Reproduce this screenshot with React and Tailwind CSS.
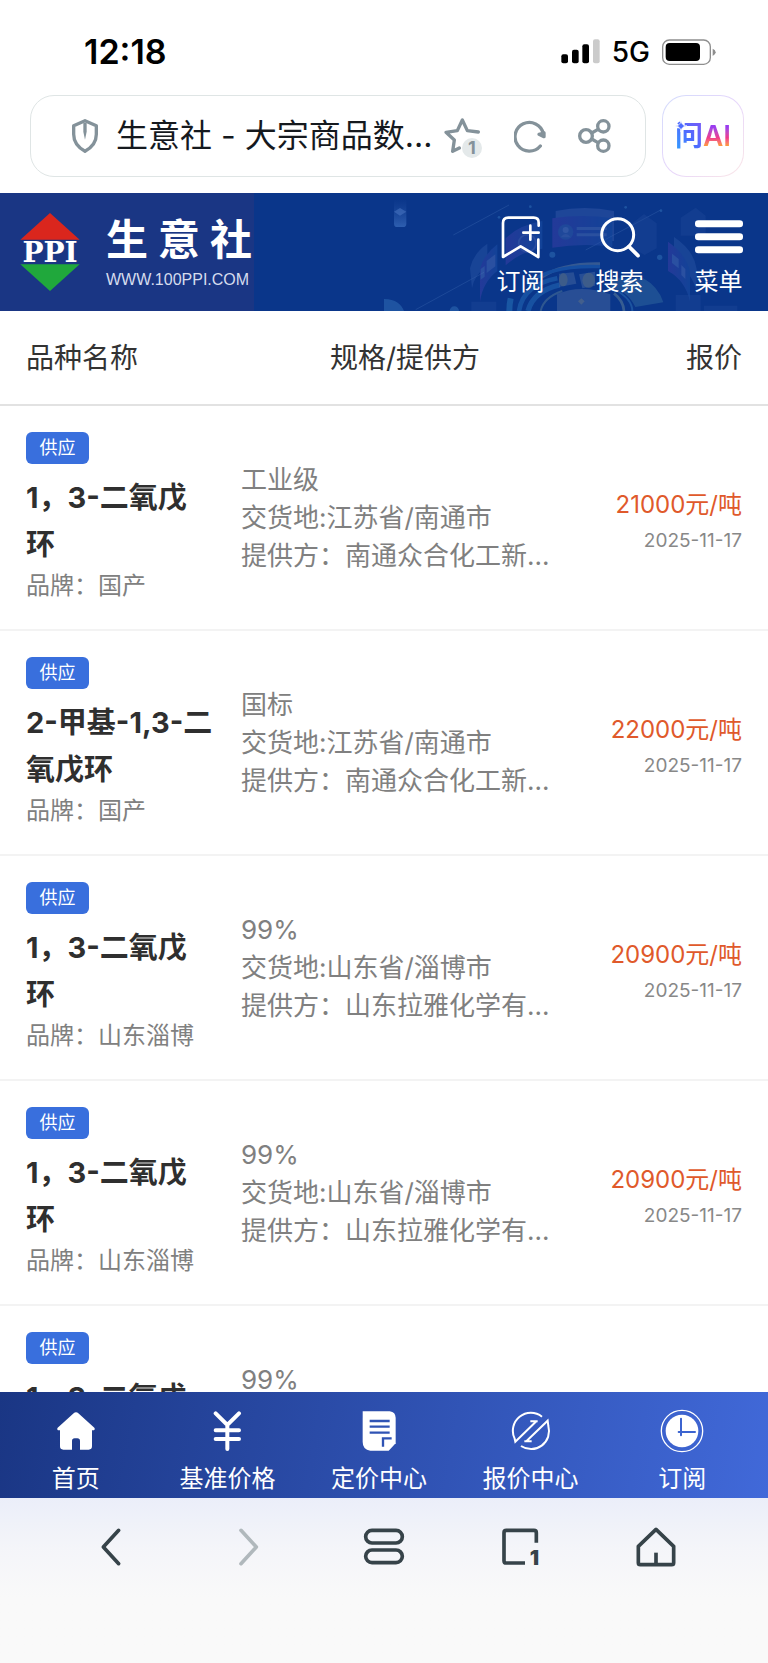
import React from 'react';

const offers = [
  { id: 1, name: '1，3-二氧戊环', brand: '国产', spec: '工业级', place: '江苏省/南通市', supplier: '南通众合化工新...', price: '21000', date: '2025-11-17' },
  { id: 2, name: '2-甲基-1,3-二氧戊环', brand: '国产', spec: '国标', place: '江苏省/南通市', supplier: '南通众合化工新...', price: '22000', date: '2025-11-17' },
  { id: 3, name: '1，3-二氧戊环', brand: '山东淄博', spec: '99%', place: '山东省/淄博市', supplier: '山东拉雅化学有...', price: '20900', date: '2025-11-17' },
  { id: 4, name: '1，3-二氧戊环', brand: '山东淄博', spec: '99%', place: '山东省/淄博市', supplier: '山东拉雅化学有...', price: '20900', date: '2025-11-17' },
  { id: 5, name: '1，3-二氧戊环', brand: '山东淄博', spec: '99%', place: '山东省/淄博市', supplier: '山东拉雅化学有...', price: '20900', date: '2025-11-17' },
];

const StatusBar = () => (
  <div className="h-[95px] shrink-0 pt-2 pl-[84px] pr-[52px] flex items-center justify-between text-black">
    <span className="text-[34px] font-semibold">12:18</span>
    <div className="flex items-center gap-3">
      <svg width="39" height="25" viewBox="0 0 117 75" aria-hidden="true">
        <rect x="1" y="46" width="20" height="27" rx="6" />
        <rect x="33" y="32" width="20" height="41" rx="6" />
        <rect x="64" y="16" width="20" height="57" rx="6" />
        <rect x="96" y="1" width="20" height="72" rx="6" fill="#cbcbcb" />
      </svg>
      <span className="text-[28px] font-medium">5G</span>
      <svg width="54" height="26" viewBox="0 0 162 78" aria-hidden="true">
        <rect x="2" y="3" width="143" height="73" rx="20" fill="none" stroke="#8e8e8e" strokeWidth="4" />
        <rect x="11" y="12" width="103" height="54" rx="12" />
        <path d="M152 29q9 4 9 11t-9 11z" fill="#8e8e8e" />
      </svg>
    </div>
  </div>
);

const AddressBar = () => (
  <div className="shrink-0 pl-[30px] pr-6 pb-4 flex gap-4">
    <div className="flex-1 min-w-0 h-[82px] pl-[41px] pr-[34px] flex items-center border border-[#dfe5e5] rounded-3xl">
      <svg className="shrink-0" width="26" height="34" viewBox="0 0 78 102" aria-hidden="true">
        <path d="M39 5 73 20v26c0 24-14 40-34 51C19 86 5 70 5 46V20z" fill="none" stroke="#84929a" strokeWidth="10" strokeLinejoin="round" />
        <path d="M34 12h10v26l-5 24-5-24z" fill="#84929a" />
      </svg>
      <input
        type="text"
        aria-label="地址栏"
        defaultValue="生意社 - 大宗商品数..."
        className="flex-1 min-w-0 ml-[18px] bg-transparent outline-none text-[32px] text-[#15191e]"
      />
      <div className="flex items-center gap-8">
        <button type="button" aria-label="收藏" className="relative">
          <svg width="38" height="36" viewBox="0 0 114 108" fill="none" stroke="#84929a" strokeWidth="10" strokeLinecap="round" strokeLinejoin="round" aria-hidden="true">
            <path d="M103 42 70 38 55 6 40 38 6 43 31 66 26 100 46 90" />
          </svg>
          <span className="absolute right-0 -bottom-1 w-5 h-5 rounded-full bg-[#e4e9ea] text-[#84929a] text-lg leading-5 font-bold text-center">
            1
          </span>
        </button>
        <button type="button" aria-label="刷新">
          <svg width="32" height="34" viewBox="0 0 96 102" fill="none" stroke="#84929a" strokeWidth="10" strokeLinecap="round" aria-hidden="true">
            <path d="M79 81A43 43 0 1 1 88 44" />
            <path d="M90 42v11l-15-7z" fill="#84929a" strokeLinejoin="round" />
          </svg>
        </button>
        <button type="button" aria-label="分享">
          <svg width="33" height="34" viewBox="0 0 99 102" fill="none" stroke="#84929a" strokeWidth="10" aria-hidden="true">
            <circle cx="24" cy="51" r="19" />
            <circle cx="76" cy="22" r="17" />
            <circle cx="76" cy="80" r="17" />
            <path d="M41 42l19-11M41 60l19 11" />
          </svg>
        </button>
      </div>
    </div>
    <div className="w-[82px] h-[82px] shrink-0 p-px rounded-[24px] bg-linear-to-br from-[#d3dcfc] via-[#e6d6fb] to-[#fbe6e6]">
      <button type="button" className="relative w-full h-full rounded-[23px] bg-white flex items-center justify-center text-[28px] leading-9">
        <span className="bg-linear-to-tr from-[#2f9bff] from-10% via-[#4d6bff] to-[#7b55f5] bg-clip-text text-transparent font-bold">问</span>
        <span className="bg-linear-to-b from-[#9a3cf0] from-25% via-[#f0388c] via-55% to-[#ffa21a] to-80% bg-clip-text text-transparent font-semibold">AI</span>
        <svg className="absolute left-[12px] top-[24px]" width="12" height="12" viewBox="0 0 30 30" aria-hidden="true">
          <path d="M15 0c1 10 5 14 15 15-10 1-14 5-15 15C14 20 10 16 0 15 10 14 14 10 15 0z" fill="#4d6bff" stroke="#fff" strokeWidth="2" />
        </svg>
      </button>
    </div>
  </div>
);

const HeaderArt = () => (
  <svg className="absolute right-0 inset-y-0 h-full" viewBox="0 24 1152 354" aria-hidden="true">
    <defs>
      <linearGradient id="panel" x1="0" x2="1">
        <stop offset="0" stopColor="#4a3fb0" />
        <stop offset="1" stopColor="#1f57ad" />
      </linearGradient>
      <linearGradient id="cube" x1="0" y1="0" x2="0" y2="1">
        <stop offset="0" stopColor="#2b58ab" stopOpacity="0" />
        <stop offset="1" stopColor="#3d70c0" />
      </linearGradient>
    </defs>
    <rect x="30" y="42" width="37" height="84" rx="10" fill="url(#cube)" opacity=".7" />
    <path d="M30 80l18-11 19 11-19 12z" fill="#4f7cc8" opacity=".5" />
    <g stroke="#2f5ba6" strokeWidth="3" opacity=".5">
      <path d="M208 150 375 60M95 374 300 262M605 195 830 75" />
    </g>
    <g fill="#2b67b0" opacity=".6">
      <circle cx="439" cy="65" r="4" />
      <circle cx="345" cy="97" r="4" />
      <circle cx="725" cy="67" r="4" />
      <circle cx="831" cy="77" r="4" />
      <circle cx="505" cy="209" r="9" />
      <circle cx="827" cy="217" r="8" />
      <path d="M0 342c35 0 52 16 60 36H0zM197 378a14 14 0 0 1 28 0z" />
    </g>
    <g opacity=".4">
      <path d="M515 78q86-18 175 0v90H515z" fill="#3c5eae" />
      <path d="M505 100q92-14 180 0v85q-90-12-180 3z" fill="url(#panel)" />
      <circle cx="545" cy="141" r="23" fill="#3f63b4" />
      <circle cx="545" cy="135" r="9" fill="#6a88cc" />
      <path d="M530 157q15-20 30 0zM578 126h90v9h-90zM578 145h90v9h-90z" fill="#5a78c0" />
    </g>
    <g opacity=".4">
      <path d="M365 160q40-40 110-52v83q-60 5-110 50z" fill="url(#panel)" />
      <circle cx="430" cy="175" r="26" fill="none" stroke="#5d6fc0" strokeWidth="5" />
      <path d="M258 250q10-45 52-74v66q-40 28-46 68z" fill="#2e59a8" />
      <path d="M288 258q6-44 52-80v80q-44 34-52 92z" fill="url(#panel)" />
      <path d="M290 252l12-9v32l-12 9zM308 228l26-20v36l-26 20z" fill="#5b78c4" />
      <path d="M870 156q60 40 68 96v70q-12-60-68-92z" fill="#2e59a8" />
      <path d="M852 170q56 40 66 90v90q-14-64-66-92z" fill="url(#panel)" />
      <path d="M864 206l20 16v28l-20-16zM892 240l12 12v30l-12-12z" fill="#5b78c4" />
    </g>
    <g fill="#234b9c" opacity=".35">
      <path d="M745 115l35-28 38 28v75l-36 20-37-20zM890 98l45-30 30 24v60h-75zM262 350h75v28h-75zM875 330h75v48h-75zM960 362h100v16H960z" />
    </g>
    <g fill="none" opacity=".55">
      <path d="M376 378q0-20 4-38" stroke="#2772b8" strokeWidth="18" />
      <path d="M405 378q12-78 115-98" stroke="#2368b5" strokeWidth="14" />
      <path d="M432 378q16-60 95-78" stroke="#2368b5" strokeWidth="16" />
      <path d="M474 276q60-42 174-40" stroke="#58769a" strokeWidth="9" />
      <path d="M430 300q60-60 218-55" stroke="#1f62b4" strokeWidth="10" />
      <path d="M470 378q8-40 65-60" stroke="#4d7296" strokeWidth="6" />
      <path d="M695 315q50 28 50 63" stroke="#2b6db2" strokeWidth="6" />
      <path d="M690 325q28 22 30 53" stroke="#5c7d98" strokeWidth="8" />
    </g>
    <path d="M680 280h98q45 25 60 72l-84 14q-24-50-74-58z" fill="#356f9f" opacity=".45" />
    <path d="M519 378v-50q70-32 160 0v50z" fill="#34589a" opacity=".7" />
    <path d="M525 266l44-4 8 34-52 10zM585 268l48-8v42l-38 8z" fill="#44659f" opacity=".5" />
    <ellipse cx="538" cy="284" rx="13" ry="20" fill="#4c6683" opacity=".6" />
    <ellipse cx="614" cy="286" rx="19" ry="23" fill="#4c6683" opacity=".6" />
    <path d="M592 340l10 9-10 10-10-10z" fill="#5d7083" opacity=".5" />
  </svg>
);

const HeaderButton = ({ label, children }) => (
  <button type="button" className="w-[99px] flex flex-col items-center">
    <span className="h-[44px] flex items-center justify-center">{children}</span>
    <span className="mt-[5px] text-2xl leading-9">{label}</span>
  </button>
);

const SiteHeader = () => (
  <header className="relative h-[118px] shrink-0 flex items-stretch justify-between bg-[#0a368a] text-white overflow-hidden">
    <HeaderArt />
    <a href="#" className="relative w-[254px] pl-5 flex items-center gap-[26px] bg-[#1a3684]">
      <svg width="60" height="78" viewBox="0 0 180 234" aria-hidden="true">
        <path d="M90 0l89 80H1z" fill="#da261d" />
        <path d="M1 154h178l-89 80z" fill="#20a83c" />
        <text x="90" y="148" textAnchor="middle" className="font-['DejaVu_Serif',serif] font-bold text-[84px]" fill="#fff">
          PPI
        </text>
      </svg>
      <div className="w-[146px] pt-1">
        <div className="flex justify-between text-[42px] leading-[48px] font-bold">
          <span>生</span>
          <span>意</span>
          <span>社</span>
        </div>
        <div className="font-['Liberation_Sans',sans-serif] text-base leading-6 mt-1 text-[#d5dcee]">WWW.100PPI.COM</div>
      </div>
    </a>
    <div className="relative flex pt-[22px]">
      <HeaderButton label="订阅">
        <svg width="40" height="44" viewBox="0 0 120 132" fill="none" stroke="#fff" strokeWidth="8" strokeLinecap="round" strokeLinejoin="round">
          <path d="M113 32V23Q113 8 98 8H22Q6 8 6 24V126L59 94 112 126V74" />
          <path d="M88 32v42M67 53h46" />
        </svg>
      </HeaderButton>
      <HeaderButton label="搜索">
        <svg width="40" height="42" viewBox="0 0 120 126" fill="none" stroke="#fff" strokeWidth="9" strokeLinecap="round">
          <circle cx="53" cy="56" r="48" />
          <path d="M87 92l27 27" strokeWidth="11" />
        </svg>
      </HeaderButton>
      <HeaderButton label="菜单">
        <svg width="48" height="36" viewBox="0 0 144 108" fill="#fff">
          <rect y="4" width="144" height="21" rx="10" />
          <rect y="43" width="144" height="21" rx="10" />
          <rect y="82" width="144" height="21" rx="10" />
        </svg>
      </HeaderButton>
    </div>
  </header>
);

const OfferRow = ({ offer }) => (
  <tr>
    <td className="pt-[26px] pb-[25px] pl-[26px] pr-7 border-b-2 border-[#f3f3f3]">
      <div className="w-[63px] h-8 rounded-md bg-[#396fdd] text-white text-lg leading-8 text-center">供应</div>
      <div className="mt-[10px] text-[29px] leading-[47px] font-bold text-[#2f2f2f]">{offer.name}</div>
      <div className="text-2xl leading-9 text-[#808080]">品牌：{offer.brand}</div>
    </td>
    <td className="border-b-2 border-[#f3f3f3] text-[26px] leading-[38px] text-[#808080]">
      <div>{offer.spec}</div>
      <div>交货地:{offer.place}</div>
      <div className="truncate">提供方：{offer.supplier}</div>
    </td>
    <td className="pr-[26px] border-b-2 border-[#f3f3f3] text-right">
      <div className="pt-[2px] text-2xl leading-[44px] text-[#e0592b]">{offer.price}元/吨</div>
      <div className="text-[19px] leading-7 text-[#888888]">{offer.date}</div>
    </td>
  </tr>
);

const OfferTable = () => (
  <main className="flex-1 min-h-0 overflow-hidden">
    <table className="w-full table-fixed border-separate border-spacing-0">
      <thead>
        <tr className="h-[95px] text-[28px] text-[#333333]">
          <th className="w-[241px] pl-[26px] text-left font-normal border-b-2 border-[#e2e2e2]">品种名称</th>
          <th className="font-normal border-b-2 border-[#e2e2e2]">规格/提供方</th>
          <th className="w-[199px] pr-[26px] text-right font-normal border-b-2 border-[#e2e2e2]">报价</th>
        </tr>
      </thead>
      <tbody>
        {offers.map((offer) => (
          <OfferRow key={offer.id} offer={offer} />
        ))}
      </tbody>
    </table>
  </main>
);

const TabLink = ({ label, children }) => (
  <a href="#" className="flex-1 flex flex-col items-center">
    <span className="h-[44px] flex items-center">{children}</span>
    <span className="mt-2 text-2xl leading-9">{label}</span>
  </a>
);

const SiteTabs = () => (
  <nav className="h-[106px] shrink-0 pt-[17px] pr-[10px] flex text-white bg-linear-[100deg] from-[#1a3684] to-[#4169d9]">
    <TabLink label="首页">
      <svg width="40" height="40" viewBox="0 0 120 120" fill="#fff">
        <path d="M60 4c-3 0-5 1-7 3L5 50c-3 4-1 8 4 8h3v48q0 10 10 10h26V90q0-8 8-8h8q8 0 8 8v26h26q10 0 10-10V58h3c5 0 7-4 4-8L67 7c-2-2-4-3-7-3z" />
      </svg>
    </TabLink>
    <TabLink label="基准价格">
      <svg width="40" height="40" viewBox="0 0 120 120" fill="none" stroke="#fff" strokeWidth="12" strokeLinecap="round">
        <path d="M26 7l35 35L96 7M61 42v72M26 58h70M26 84h70" />
      </svg>
    </TabLink>
    <TabLink label="定价中心">
      <svg width="40" height="40" viewBox="0 0 120 120">
        <path d="M11 1h81q18 2 18 20v76l-21 22H34q-23-3-23-26z" fill="#fff" />
        <path d="M32 30h60M32 47h60M32 65h60M72 107V82h26" fill="none" stroke="#2f53b4" strokeWidth="7" />
      </svg>
    </TabLink>
    <TabLink label="报价中心">
      <svg width="40" height="40" viewBox="0 0 120 120" fill="none" stroke="#fff" strokeWidth="6">
        <path d="M93 17A54 54 0 0 0 11 83L13 92 76 31M58 31h22" />
        <path d="M30 105A54 54 0 0 0 112 45L110 29 46 91M40 91h22" />
      </svg>
    </TabLink>
    <TabLink label="订阅">
      <svg width="44" height="44" viewBox="0 0 132 132">
        <circle cx="66" cy="66" r="62" fill="none" stroke="#fff" strokeWidth="4" />
        <circle cx="66" cy="66" r="49" fill="#fff" />
        <path d="M63 29v50M56 69h49" stroke="#3c64d0" strokeWidth="6" strokeLinecap="round" />
      </svg>
    </TabLink>
  </nav>
);

const BrowserButton = ({ label, children }) => (
  <button type="button" aria-label={label} className="flex-1 flex items-center justify-center">
    <svg width="42" height="42" viewBox="0 0 126 126" fill="none" stroke="#364349" strokeWidth="11" strokeLinecap="round" strokeLinejoin="round">
      {children}
    </svg>
  </button>
);

const BrowserToolbar = () => (
  <div className="h-[165px] shrink-0 px-11 pt-7 flex items-start bg-linear-to-b from-[#ebeef9] via-[#f4f5f9] via-30% to-[#f9f9f9] to-60%">
    <BrowserButton label="后退">
      <path d="M83 13L37 63l46 50" />
    </BrowserButton>
    <BrowserButton label="前进">
      <path d="M42 13l46 50-46 50" stroke="#b0b8bc" />
    </BrowserButton>
    <BrowserButton label="菜单">
      <rect x="8" y="13" width="110" height="38" rx="19" />
      <rect x="8" y="72" width="110" height="38" rx="19" />
    </BrowserButton>
    <BrowserButton label="标签页">
      <path d="M112 50V20q0-7-7-7H22q-7 0-7 7v84q0 7 7 7h56" strokeLinecap="butt" />
      <text x="120" y="116" textAnchor="end" className="text-[62px] font-black" fill="#364349" stroke="none">
        1
      </text>
    </BrowserButton>
    <BrowserButton label="主页">
      <path d="M63 10L10 61v49q0 6 6 6h94q6 0 6-6V61z" />
      <path d="M63 80v34" strokeLinecap="butt" />
    </BrowserButton>
  </div>
);

export default function App() {
  return (
    <div className="h-screen flex flex-col bg-white font-['Inter','Noto_Sans_CJK_SC',sans-serif]">
      <StatusBar />
      <AddressBar />
      <SiteHeader />
      <OfferTable />
      <SiteTabs />
      <BrowserToolbar />
    </div>
  );
}
